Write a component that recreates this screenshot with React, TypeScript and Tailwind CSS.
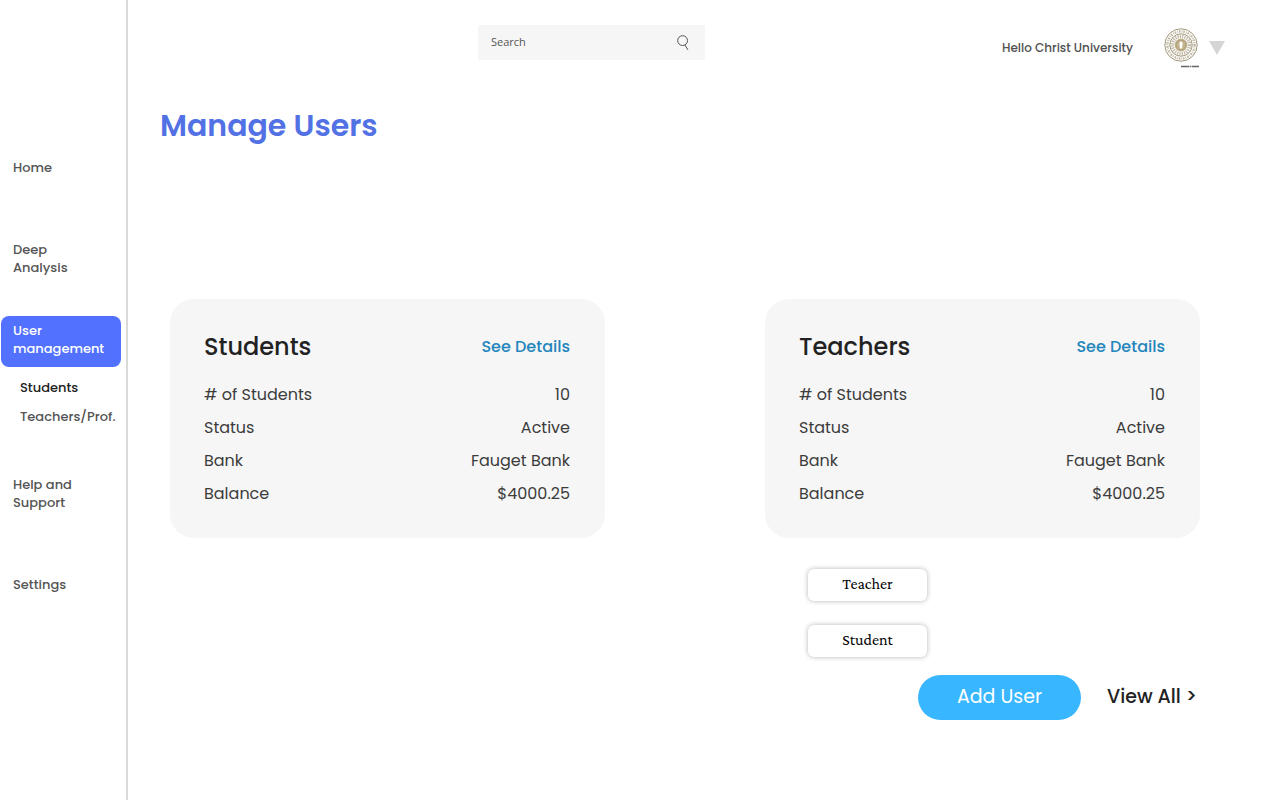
import React from "react";

type CardProps = { title: string; rows: [string, string][] };

function SummaryCard({ title, rows }: CardProps) {
  return (
    <section className="rounded-3xl bg-[#f6f6f6] pt-[30px] pr-[35px] pb-7 pl-[34px]">
      <div className="flex items-center justify-between">
        <h2 className="text-2xl leading-9 font-medium text-[#222]">{title}</h2>
        <a href="#details" className="text-base font-medium text-[#2386bd]">See Details</a>
      </div>
      <dl className="mt-[13px] text-base leading-[33px] text-[#3c3c3c]">
        {rows.map(([label, value]) => (
          <div key={label} className="flex justify-between">
            <dt>{label}</dt>
            <dd>{value}</dd>
          </div>
        ))}
      </dl>
    </section>
  );
}

function Seal() {
  return (
    <svg viewBox="0 0 36 42" className="h-[42px] w-9" role="img" aria-label="Christ University">
      <g fill="none" stroke="#a3977c">
        <circle cx="17" cy="18" r="16.2" strokeWidth="1" />
        <circle cx="17" cy="18" r="13.6" strokeWidth="2.4" strokeDasharray="1.6 1.1 0.8 0.9" opacity="0.7" />
        <circle cx="17" cy="18" r="11.2" strokeWidth="1" />
        <circle cx="17" cy="18" r="8.6" strokeWidth="3.4" strokeDasharray="1.2 1.1" opacity="0.7" />
      </g>
      <circle cx="17" cy="18" r="6.4" fill="#c4b48f" />
      <circle cx="17" cy="18" r="4.8" fill="none" stroke="#9a8962" strokeWidth="0.9" strokeDasharray="1 0.7" />
      <path d="M17 14c1.8 1.6 2.2 3.1 1.2 4.4v3h-2.4v-3c-1-1.3-.6-2.8 1.2-4.4z" fill="#fff" />
      <path d="M17 39.5h18" stroke="#666" strokeWidth="1.3" strokeDasharray="8 .6 1.6 .6 7.2 0" />
    </svg>
  );
}

const rows: [string, string][] = [
  ["# of Students", "10"],
  ["Status", "Active"],
  ["Bank", "Fauget Bank"],
  ["Balance", "$4000.25"],
];

export default function App() {
  return (
    <div className="flex min-h-screen bg-white font-['Poppins','Inter',sans-serif] antialiased">
      <nav className="w-32 shrink-0 border-r-2 border-[#d9d9d9] pt-[159px] text-[13px] leading-[18px] font-medium text-[#555]">
        <a href="#home" className="block pl-[13px]">Home</a>
        <a href="#analysis" className="mt-16 block pr-10 pl-[13px]">Deep Analysis</a>
        <a href="#users" aria-current="page" className="mt-[39px] mr-[5px] ml-px block rounded-lg bg-[#5271ff] pt-1.5 pr-2 pb-[9px] pl-3 text-white">
          User<br />management
        </a>
        <a href="#students" className="mt-3 block pl-5 text-[#222]">Students</a>
        <a href="#teachers" className="mt-[11px] block pl-5">Teachers/Prof.</a>
        <a href="#help" className="mt-[50px] block pr-10 pl-[13px]">Help and Support</a>
        <a href="#settings" className="mt-16 block pl-[13px]">Settings</a>
      </nav>

      <div className="min-w-0 grow">
        <header className="flex items-start pt-[25px] pr-[55px]">
          <label className="ml-[350px] flex h-[35px] w-[227px] items-center rounded-xs bg-[#f6f6f6] pr-[15px] pl-[13px]">
            <input
              type="search"
              aria-label="Search"
              placeholder="Search"
              className="w-full min-w-0 bg-transparent font-['Open_Sans',sans-serif] text-[11px] outline-none placeholder:text-[#555]"
            />
            <svg viewBox="0 0 14 16" className="h-4 w-3.5 shrink-0" fill="none" stroke="#555" strokeWidth="1">
              <circle cx="6.6" cy="5.6" r="4.9" />
              <path d="M8.9 9.9l3 5" />
            </svg>
          </label>
          <div className="ml-auto flex items-center pt-0.5">
            <span className="text-xs font-medium text-[#505050]">Hello Christ University</span>
            <span className="ml-[31px]"><Seal /></span>
            <button type="button" aria-label="Account menu" className="ml-[9px]">
              <svg viewBox="0 0 16 14" className="h-3.5 w-4"><path d="M0 0h16L8 14z" fill="#d5d5d5" /></svg>
            </button>
          </div>
        </header>

        <main className="pr-20 pl-[42px]">
          <h1 className="mt-[39px] -ml-2.5 text-3xl leading-9 font-semibold text-[#5271e5]">Manage Users</h1>
          <div className="mt-[155px] grid grid-cols-2 gap-x-40">
            <SummaryCard title="Students" rows={rows} />
            <SummaryCard title="Teachers" rows={rows} />
            <div className="col-start-2 mt-[31px] flex flex-col items-start gap-6 pl-[43px] font-['Crimson_Pro','Crimson_Text','Liberation_Serif',serif] text-base text-black">
              <button type="button" className="h-8 w-[119px] rounded-md bg-white pb-0.5 shadow-[0_0_5px_rgba(0,0,0,0.3)]">Teacher</button>
              <button type="button" className="h-8 w-[119px] rounded-md bg-white pb-0.5 shadow-[0_0_5px_rgba(0,0,0,0.3)]">Student</button>
            </div>
            <div className="col-start-2 mt-[18px] flex items-center justify-end gap-[26px] pr-[3px] text-[19px] whitespace-nowrap">
              <button type="button" className="h-[45px] w-[163px] rounded-full bg-[#38b6ff] text-white">Add User</button>
              <a href="#all" className="font-medium text-[#222]">View All &gt;</a>
            </div>
          </div>
        </main>
      </div>
    </div>
  );
}
